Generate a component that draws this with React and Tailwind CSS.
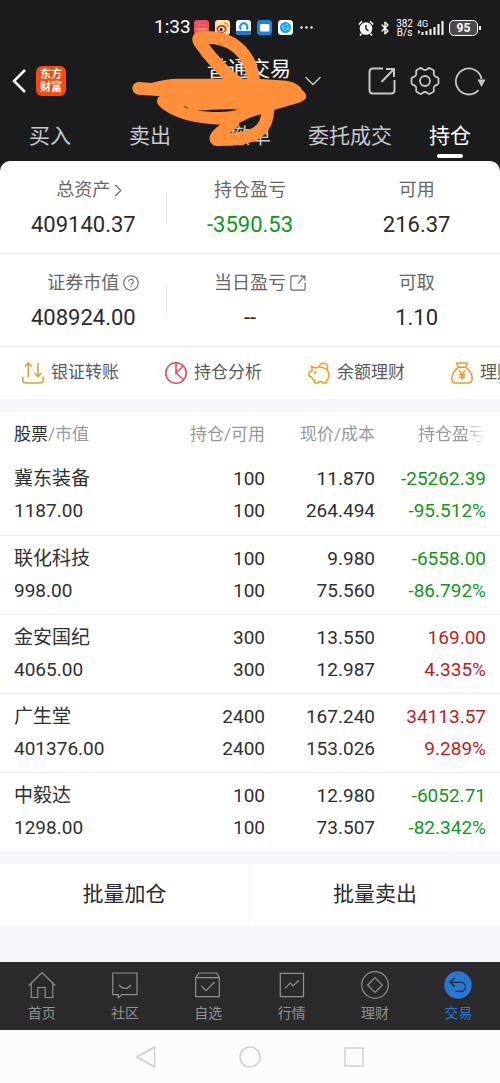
import { Bluetooth } from "lucide-react";

const tabs = ["买入", "卖出", "撤单", "委托成交", "持仓"];

const summary = [
  [
    { label: "总资产", value: "409140.37", icon: "arrow" },
    { label: "持仓盈亏", value: "-3590.53", color: "text-[#109618]" },
    { label: "可用", value: "216.37" },
  ],
  [
    { label: "证券市值", value: "408924.00", icon: "help" },
    { label: "当日盈亏", value: "--", icon: "share" },
    { label: "可取", value: "1.10" },
  ],
];

const shortcuts = [
  { label: "银证转账", icon: TransferIcon },
  { label: "持仓分析", icon: PieIcon },
  { label: "余额理财", icon: PiggyIcon },
  { label: "理财", icon: MoneyBagIcon },
];

const holdings = [
  { name: "冀东装备", value: "1187.00", amount: "100", usable: "100", price: "11.870", cost: "264.494", profit: "-25262.39", rate: "-95.512%" },
  { name: "联化科技", value: "998.00", amount: "100", usable: "100", price: "9.980", cost: "75.560", profit: "-6558.00", rate: "-86.792%" },
  { name: "金安国纪", value: "4065.00", amount: "300", usable: "300", price: "13.550", cost: "12.987", profit: "169.00", rate: "4.335%" },
  { name: "广生堂", value: "401376.00", amount: "2400", usable: "2400", price: "167.240", cost: "153.026", profit: "34113.57", rate: "9.289%" },
  { name: "中毅达", value: "1298.00", amount: "100", usable: "100", price: "12.980", cost: "73.507", profit: "-6052.71", rate: "-82.342%" },
];

const navItems = [
  { label: "首页", icon: <path d="M.8 14.5 14 1.5l13.2 13M3.2 12.5v14h6.6v-10h7.4v10h7.6v-14" /> },
  { label: "社区", icon: <path d="M1.8 2H26v21.7H10.7l-3.4 3v-3H1.8zM8 14q6 7 12 0" /> },
  { label: "自选", icon: <path d="M1.7 6.7 4.7 2h18l2.6 4.7v19H1.7zM1.7 6.7h23.6M7.3 15l4.7 4.7 8.5-8.7" /> },
  { label: "行情", icon: <path d="M2.3 2.3h23.2v23.4H2.3zM7 17.3l5.3-5.3 2.7 3 6-5.7" /> },
  {
    label: "理财",
    icon: (
      <>
        <circle cx="14" cy="14" r="13.3" />
        <path d="m14 6.7 7.3 7.3-7.3 7.3L6.7 14z" />
      </>
    ),
  },
  {
    label: "交易",
    active: true,
    icon: (
      <>
        <circle cx="14" cy="14" r="13.7" fill="#2977d1" stroke="none" />
        <path d="M10.7 7 6 11.3l4.7 4.2M6 11.3h11a4.5 4.5 0 0 1 0 9h-5.5" stroke="#20262e" />
      </>
    ),
  },
];

function TransferIcon() {
  return (
    <svg viewBox="0 0 22 22" className="size-[22px]" fill="none" stroke="#dba23a" strokeWidth="1.6">
      <path d="M6.3 15V1M2.8 4.5 6.3 1l3.5 3.5M16 1v13.5M12.5 11l3.5 3.5 3.5-3.5" />
      <path d="M.8 15v2.5Q.8 21 4.3 21h13.4q3.5 0 3.5-3.5V15" />
    </svg>
  );
}

function PieIcon() {
  return (
    <svg viewBox="0 0 22 22" className="size-[22px]" fill="none" stroke="#e2505a" strokeWidth="1.6">
      <circle cx="11" cy="11" r="10.2" />
      <path d="M11 1v10l7.5-7.5M11 11l8 7" />
    </svg>
  );
}

function PiggyIcon() {
  return (
    <svg viewBox="0 0 22 22" className="size-[22px]" fill="none" stroke="#f0a020" strokeWidth="1.5" strokeLinejoin="round">
      <path d="M3.3 4.2 7.3 6Q10 4.7 13 5.2q8 1 8 8.3 0 3-2.6 5.3V21h-3.7l-.7-1.3h-3L10.2 21H6.7v-2.2q-2.2-1.3-2.9-3.5L1 14v-3.7l2.4-.8q.3-1 .9-1.8z" />
      <path d="M11.3 5a4.2 4.2 0 1 1 7.7 2.7" />
      <circle cx="7.3" cy="10.7" r=".6" fill="#f0a020" />
    </svg>
  );
}

function MoneyBagIcon() {
  return (
    <svg viewBox="0 0 22 22" className="size-[22px]" fill="none" stroke="#eb9a28" strokeWidth="1.5" strokeLinejoin="round">
      <path d="M5.5 1h11l-2 4.2h-7zM7.5 5.2Q.8 10.5.8 16.5.8 21 5 21h12q4.2 0 4.2-4.5 0-6-6.7-11.3" />
      <path d="m8 8.5 3 3.8 3-3.8M11 12.3V18M7.8 12.7h6.4M7.8 15.2h6.4" />
    </svg>
  );
}

function ShareIcon({ className }) {
  return (
    <svg viewBox="0 0 28 28" className={className} fill="none" stroke="currentColor" strokeWidth="2">
      <path d="M15 1.5H5Q1.5 1.5 1.5 5v18q0 3.5 3.5 3.5h18q3.5 0 3.5-3.5V13" />
      <path d="m13.5 15 12-12.5M18 2h8v8" />
    </svg>
  );
}

function LabelIcon({ type }) {
  if (type === "arrow") {
    return (
      <svg viewBox="0 0 8 14" className="h-[13px] w-2" fill="none" stroke="currentColor" strokeWidth="1.3">
        <path d="m1 1 6 6-6 6" />
      </svg>
    );
  }
  if (type === "help") {
    return (
      <svg viewBox="0 0 16 16" className="size-4" fill="none" stroke="currentColor" strokeWidth="1.1">
        <circle cx="8" cy="8" r="7.3" />
        <path d="M5.7 6.5a2.3 2.3 0 1 1 3.5 1.9Q8 9 8 10.2M8 11.3v1.2" />
      </svg>
    );
  }
  return <ShareIcon className="size-4" />;
}

function StatusBar() {
  return (
    <div className="flex h-[55px] items-center pr-[19px] pl-[154px] text-white">
      <span className="w-10 text-[19px]">1:33</span>
      <div className="flex items-center gap-[6px]">
        <svg viewBox="0 0 15 15" className="size-[15px]">
          <rect width="15" height="15" rx="3" fill="#f4505c" />
          <path d="M2 9h11M5 4.5l1 1M10 4.5l-1 1" stroke="#ffc4c8" strokeWidth="1.2" />
        </svg>
        <svg viewBox="0 0 15 15" className="size-[15px]">
          <rect width="15" height="15" rx="3" fill="#ffe1a3" />
          <ellipse cx="6.5" cy="9" rx="5" ry="4" fill="#d52c28" />
          <ellipse cx="6.5" cy="9.3" rx="3.2" ry="2.5" fill="#fff" />
          <circle cx="6.2" cy="9.5" r="1.5" fill="#111" />
          <path d="M9 3q4-.5 4 4" fill="none" stroke="#ee8b22" strokeWidth="1.3" />
        </svg>
        <svg viewBox="0 0 15 15" className="size-[15px]">
          <rect width="15" height="15" rx="3" fill="#eff8ff" />
          <path d="M0 11h15v1q0 3-3 3H3q-3 0-3-3z" fill="#1779cf" />
          <path d="M5 9.5a3.7 3.7 0 1 1 5.5 0" fill="none" stroke="#258bdd" strokeWidth="2" />
        </svg>
        <svg viewBox="0 0 15 15" className="size-[15px]">
          <rect width="15" height="15" rx="3" fill="#1684e8" />
          <rect x="3" y="4" width="9.5" height="7.5" rx="1" fill="#fff" />
        </svg>
        <svg viewBox="0 0 15 15" className="size-[15px]">
          <rect width="15" height="15" rx="3.5" fill="#fff" />
          <circle cx="7.5" cy="7.5" r="5.5" fill="#18a4e8" />
          <path d="M4 6.5 9.5 4l1 5.5-4 1zM4 6.5l6.5 3" fill="none" stroke="#8cdcff" strokeWidth=".7" />
        </svg>
        <svg viewBox="0 0 15 15" className="size-[15px]" fill="#fff">
          <circle cx="2.5" cy="7.5" r="1.2" />
          <circle cx="7.5" cy="7.5" r="1.2" />
          <circle cx="12.5" cy="7.5" r="1.2" />
        </svg>
      </div>
      <div className="ml-auto flex items-center gap-1">
        <svg viewBox="0 0 16 16" className="size-4" fill="none" stroke="#1c1c1e" strokeWidth="1.5">
          <circle cx="8" cy="8.5" r="6.3" fill="#fff" stroke="none" />
          <path d="M8 5v4l2.5 2" />
          <path d="M.8 4.5 4 1.3M15.2 4.5 12 1.3M3.5 13.5l-1.5 2M12.5 13.5l1.5 2" stroke="#fff" />
        </svg>
        <Bluetooth className="h-[18px] w-[14px]" strokeWidth={2.5} />
        <div className="text-center text-[10px] leading-[9px]">
          <div>382</div>
          <div>B/s</div>
        </div>
        <svg viewBox="0 0 28 16" className="h-4 w-7" fill="#fff">
          <text x="0" y="7" fontSize="9" fontFamily="Roboto, sans-serif">4G</text>
          <path d="M1 10l2.5 2L1 14zM4.5 12h2v3h-2zM8.5 11h2v4h-2zM12.5 9h2v6h-2zM16.5 7h2v8h-2zM20.5 4h2v11h-2zM24.5 1h2v14h-2z" />
        </svg>
        <div className="flex items-center gap-px">
          <div className="flex h-4 w-[29px] items-center justify-center rounded-[5px] border border-white bg-[#4a4a4c] text-xs font-bold">
            95
          </div>
          <div className="h-1 w-0.5 bg-white" />
        </div>
      </div>
    </div>
  );
}

function TopBar() {
  return (
    <div className="grid h-[52px] grid-cols-[1fr_auto_1fr] items-center pr-[14px] pl-3">
      <div className="flex items-center gap-[10px]">
        <button aria-label="返回" className="text-white">
          <svg viewBox="0 0 14 24" className="h-6 w-[14px]" fill="none" stroke="currentColor" strokeWidth="2.5">
            <path d="M13 1 2 12l11 11" />
          </svg>
        </button>
        <div className="flex size-[30px] flex-col items-center justify-center rounded-md bg-[#fb4a0c] text-[11px] leading-[13px] font-bold text-white">
          <span>东方</span>
          <span>财富</span>
        </div>
      </div>
      <button className="relative pb-6 text-[21px] leading-7 text-white">
        普通交易
        <svg
          viewBox="0 0 16 9"
          className="absolute top-1/2 left-full ml-[14px] h-[9px] w-4 -translate-y-1/2"
          fill="none"
          stroke="#d0d0d0"
          strokeWidth="1.3"
        >
          <path d="M.5.5 8 8 15.5.5" />
        </svg>
      </button>
      <div className="flex items-center justify-end gap-[14px] text-[#c6c6c6]">
        <button aria-label="分享">
          <ShareIcon className="size-7" />
        </button>
        <button aria-label="设置">
          <svg viewBox="0 0 30 30" className="size-[30px]" fill="none" stroke="currentColor" strokeWidth="1.8" strokeLinejoin="round">
            <path d="M10.5 2q1.5 0 2.2 1.2.8.8 2.3.8t2.3-.8Q18 2 19.5 2l4 2.3q.8 1.2.3 2.7-.2 1.4.5 2.5.9 1.2 2.2 1.5 1.5.3 2 1.5v5q-.5 1.2-2 1.5-1.3.3-2.2 1.5-.7 1.1-.5 2.5.5 1.5-.3 2.7l-4 2.3q-1.5 0-2.2-1.2-.8-.8-2.3-.8t-2.3.8Q12 28 10.5 28l-4-2.3q-.8-1.2-.3-2.7.2-1.4-.5-2.5Q4.8 19.3 3.5 19q-1.5-.3-2-1.5v-5q.5-1.2 2-1.5 1.3-.3 2.2-1.5.7-1.1.5-2.5-.5-1.5.3-2.7z" />
            <circle cx="15" cy="15" r="5" />
          </svg>
        </button>
        <button aria-label="刷新">
          <svg viewBox="0 0 32 30" className="h-[30px] w-8" fill="none" stroke="currentColor" strokeWidth="1.8">
            <path d="M24.5 24.2A13 13 0 1 1 27.6 13" />
            <path d="M23.5 13.5h8l-4 7.5z" fill="currentColor" stroke="none" />
          </svg>
        </button>
      </div>
    </div>
  );
}

function Tabs() {
  return (
    <nav className="grid h-[54px] grid-cols-5">
      {tabs.map((tab) => (
        <button
          key={tab}
          className={`flex flex-col items-center gap-[3px] pt-[14px] text-[21px] leading-[30px] whitespace-nowrap ${
            tab === "持仓" ? "text-white" : "text-[#c8c8c8]"
          }`}
        >
          {tab}
          {tab === "持仓" && <span className="h-1 w-[26px] rounded-full bg-white" />}
        </button>
      ))}
    </nav>
  );
}

// hand-drawn marker over the account name
function Scribble() {
  return (
    <svg
      viewBox="0 0 570 435"
      className="pointer-events-none absolute top-[10px] left-1/4 h-[145px] w-[190px]"
      fill="none"
      stroke="#ff8f3a"
      strokeWidth="38"
      strokeLinecap="round"
      strokeLinejoin="round"
    >
      <path
        d="M75 220Q120 206 160 206L400 206L485 212Q525 220 531 240Q546 250 543 265Q535 278 490 287L440 302L425 312L412 312Q385 317 350 335L330 345Q210 345 150 318Q95 292 96 272Q98 260 106 258L75 252ZM175 290Q185 287 190 296ZM215 302Q270 296 338 298Q320 308 265 306Z"
        fill="#ff8f3a"
        fillRule="evenodd"
        stroke="none"
      />
      <path d="M41 235L110 240" />
      <path d="M345 225Q270 165 223 95Q213 76 250 82Q330 84 368 150Q384 180 388 225" />
      <path d="M428 290Q432 340 400 365Q370 390 275 389Q266 384 290 364L325 336" />
    </svg>
  );
}

function Summary() {
  return (
    <section>
      {summary.map((row, i) => (
        <div key={i} className="grid h-[93px] grid-cols-3 border-b border-[#ececec] pt-[14px]">
          {row.map((item, j) => (
            <div key={item.label} className="relative text-center">
              <div className="text-lg leading-[30px] text-[#666]">
                <span className="relative inline-block">
                  {item.label}
                  {item.icon && (
                    <span className="absolute inset-y-0 left-full ml-1 flex items-center">
                      <LabelIcon type={item.icon} />
                    </span>
                  )}
                </span>
              </div>
              <div className={`mt-0.5 text-[22px] leading-9 ${item.color || "text-[#2b2b2b]"}`}>{item.value}</div>
              {j === 0 && <span className="absolute top-[17px] right-0 h-8 w-px bg-[#ececec]" />}
            </div>
          ))}
        </div>
      ))}
    </section>
  );
}

function Shortcuts() {
  return (
    <div className="flex h-[52px] overflow-hidden pl-[22px]">
      {shortcuts.map(({ label, icon: Icon }) => (
        <button
          key={label}
          className="flex w-[143px] shrink-0 items-center gap-[7px] text-[17px] whitespace-nowrap text-[#5a5a5a]"
        >
          <Icon />
          {label}
        </button>
      ))}
    </div>
  );
}

function HoldingsTable() {
  return (
    <table className="mt-[13px] w-full table-fixed bg-white text-right text-[19px] leading-8 text-[#2f2f2f]">
      <thead>
        <tr className="h-11 text-[17px] whitespace-nowrap text-[#999]">
          <th className="w-[31%] pl-[14px] text-left font-normal">
            <span className="text-[#2f2f2f]">股票</span>/市值
          </th>
          <th className="w-[22%] font-normal">持仓/可用</th>
          <th className="w-[22%] font-normal">现价/成本</th>
          <th className="w-[25%] pr-[14px] font-normal">
            <span className="[mask-image:linear-gradient(to_right,black_70%,transparent)]">持仓盈亏</span>
          </th>
        </tr>
      </thead>
      <tbody>
        {holdings.map((item) => (
          <tr key={item.name} className="h-[79px] border-b border-[#ececec] last:border-0">
            <td className="pl-[14px] text-left">
              <div>{item.name}</div>
              <div>{item.value}</div>
            </td>
            <td>
              <div>{item.amount}</div>
              <div>{item.usable}</div>
            </td>
            <td>
              <div>{item.price}</div>
              <div>{item.cost}</div>
            </td>
            <td className={`pr-[14px] ${item.profit.startsWith("-") ? "text-[#109618]" : "text-[#c01a1e]"}`}>
              <div>{item.profit}</div>
              <div>{item.rate}</div>
            </td>
          </tr>
        ))}
      </tbody>
    </table>
  );
}

function BottomNav() {
  return (
    <nav className="mt-auto grid h-[68px] grid-cols-6 bg-[#2b2b2d]">
      {navItems.map((item) => (
        <a
          key={item.label}
          href="#"
          className={`flex flex-col items-center gap-1 pt-[9px] text-sm leading-5 ${
            item.active ? "text-[#2977d1]" : "text-[#919191]"
          }`}
        >
          <svg viewBox="0 0 28 28" className="size-7" fill="none" stroke="currentColor" strokeWidth="1.2">
            {item.icon}
          </svg>
          {item.label}
        </a>
      ))}
    </nav>
  );
}

function SystemNav() {
  return (
    <div className="flex h-[53px] items-center justify-center gap-[82px] bg-[#fcfcfc]">
      <button aria-label="后退">
        <svg viewBox="0 0 22 22" className="size-[22px]" fill="none" stroke="#cfcfcf" strokeWidth="1.5" strokeLinejoin="round">
          <path d="M19.5 1v20L2 11z" />
        </svg>
      </button>
      <button aria-label="主屏幕">
        <svg viewBox="0 0 22 22" className="size-[22px]" fill="none" stroke="#cfcfcf" strokeWidth="1.5">
          <circle cx="11" cy="11" r="10" />
        </svg>
      </button>
      <button aria-label="多任务">
        <svg viewBox="0 0 22 22" className="size-[22px]" fill="none" stroke="#cfcfcf" strokeWidth="1.5">
          <rect x="2" y="2" width="18" height="18" />
        </svg>
      </button>
    </div>
  );
}

export default function App() {
  return (
    <div className="flex min-h-screen flex-col bg-[#f5f7fa] font-[Roboto,'Noto_Sans_CJK_SC',sans-serif]">
      <header className="relative bg-[#1c1c1e]">
        <StatusBar />
        <TopBar />
        <Tabs />
        <Scribble />
      </header>
      <main>
        <div className="bg-[#1c1c1e]">
          <div className="rounded-t-[10px] bg-white">
            <Summary />
            <Shortcuts />
          </div>
        </div>
        <HoldingsTable />
        <div className="mt-[13px] mb-[37px] grid h-[61px] grid-cols-2 divide-x divide-[#f7f7f7] bg-white text-[21px] text-[#2b2b2b]">
          <button>批量加仓</button>
          <button>批量卖出</button>
        </div>
      </main>
      <BottomNav />
      <SystemNav />
    </div>
  );
}
